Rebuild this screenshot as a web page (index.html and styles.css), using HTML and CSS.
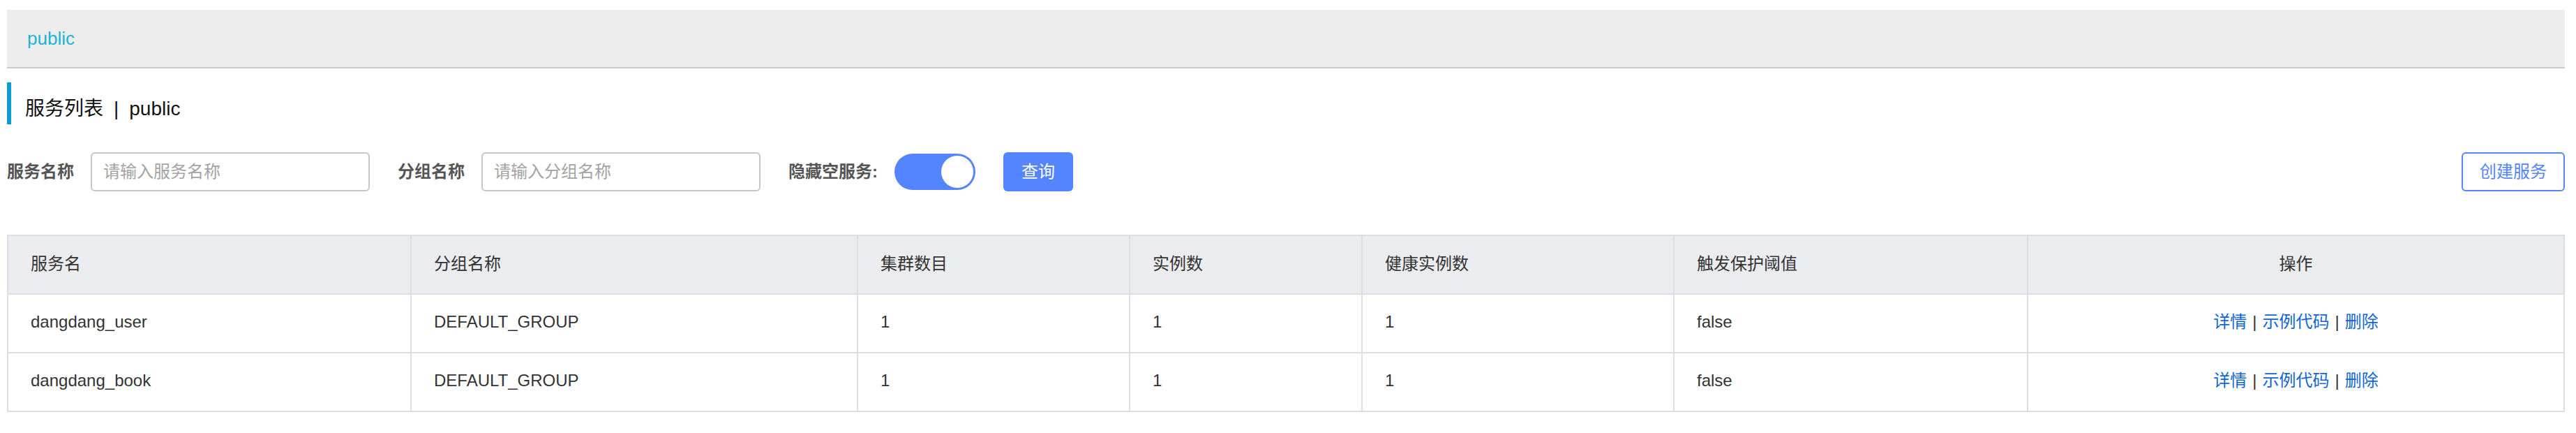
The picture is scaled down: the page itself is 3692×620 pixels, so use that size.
FILE: index.html
```html
<!DOCTYPE html>
<html lang="zh-CN">
<head>
<meta charset="utf-8">
<title>服务列表</title>
<link rel="stylesheet" href="styles.css">
</head>
<body>
<div class="page">
  <div class="ns-bar"><span class="ns-item">public</span></div>

  <h3 class="page-title"><span>服务列表</span><span class="title-sep">|</span><span>public</span></h3>

  <div class="filters">
    <div class="form-item">
      <label class="label">服务名称</label>
      <input class="input" type="text" placeholder="请输入服务名称">
    </div>
    <div class="form-item">
      <label class="label">分组名称</label>
      <input class="input" type="text" placeholder="请输入分组名称">
    </div>
    <div class="form-item">
      <label class="label">隐藏空服务:</label>
      <span class="switch"><span class="knob"></span></span>
    </div>
    <div class="form-item">
      <button class="btn btn-primary">查询</button>
    </div>
    <button class="btn btn-outline create">创建服务</button>
  </div>

  <table class="svc-table">
    <colgroup>
      <col class="w1"><col class="w2"><col class="w3"><col class="w4"><col class="w5"><col class="w6"><col class="w7">
    </colgroup>
    <thead>
      <tr>
        <th>服务名</th>
        <th>分组名称</th>
        <th>集群数目</th>
        <th>实例数</th>
        <th>健康实例数</th>
        <th>触发保护阈值</th>
        <th class="center">操作</th>
      </tr>
    </thead>
    <tbody>
      <tr>
        <td>dangdang_user</td>
        <td>DEFAULT_GROUP</td>
        <td>1</td>
        <td>1</td>
        <td>1</td>
        <td>false</td>
        <td class="center"><a class="link">详情</a><span class="op-sep">|</span><a class="link">示例代码</a><span class="op-sep">|</span><a class="link">删除</a></td>
      </tr>
      <tr>
        <td>dangdang_book</td>
        <td>DEFAULT_GROUP</td>
        <td>1</td>
        <td>1</td>
        <td>1</td>
        <td>false</td>
        <td class="center"><a class="link">详情</a><span class="op-sep">|</span><a class="link">示例代码</a><span class="op-sep">|</span><a class="link">删除</a></td>
      </tr>
    </tbody>
  </table>
</div>
</body>
</html>
```

FILE: styles.css
```css
* { box-sizing: border-box; }

html, body {
  margin: 0;
  padding: 0;
  background: #fff;
}

body {
  font-family: "Liberation Sans", "Noto Sans CJK SC", sans-serif;
  font-size: 24px;
  color: #333;
}

.page {
  padding: 14px 16px 0 10px;
}

/* namespace bar */
.ns-bar {
  height: 84px;
  background: #ededed;
  border-bottom: 2px solid #cccccc;
  padding-left: 29px;
  display: flex;
  align-items: center;
}

.ns-item {
  font-size: 26px;
  color: #16b6d8;
  line-height: 30px;
}

/* title */
.page-title {
  margin: 20px 0 40px 0;
  height: 60px;
  border-left: 6px solid #0b9bcf;
  padding: 24px 0 0 20px;
  font-size: 28px;
  font-weight: normal;
  line-height: 28px;
  color: #111;
}

.title-sep {
  margin: 0 15px;
}

/* filters */
.filters {
  display: flex;
  align-items: center;
  height: 56px;
}

.form-item {
  display: flex;
  align-items: center;
  margin-right: 40px;
}

.label {
  font-size: 24px;
  font-weight: 700;
  color: #555;
  margin-right: 24px;
  line-height: 28px;
}

.input {
  width: 400px;
  height: 56px;
  border: 2px solid #c4c6cf;
  border-radius: 6px;
  padding: 0 16px;
  font-family: "Liberation Sans", "Noto Sans CJK SC", sans-serif;
  font-size: 24px;
  color: #333;
  outline: none;
  background: #fff;
}

.input::placeholder {
  color: #a3a3a3;
}

.switch {
  width: 116px;
  height: 52px;
  border-radius: 26px;
  background: #5584ff;
  display: flex;
  align-items: center;
  justify-content: flex-end;
  padding-right: 2px;
}

.knob {
  width: 48px;
  height: 48px;
  border-radius: 50%;
  background: #fff;
  border: 1px solid #5584ff;
}

.btn {
  height: 56px;
  border-radius: 6px;
  font-family: "Liberation Sans", "Noto Sans CJK SC", sans-serif;
  font-size: 24px;
  line-height: 28px;
  cursor: pointer;
}

.btn-primary {
  background: #5584ff;
  color: #fff;
  border: none;
  padding: 0 26px;
}

.btn-outline {
  background: #fff;
  color: #5584ff;
  border: 2px solid #5584ff;
  padding: 0 24px;
}

.create {
  margin-left: auto;
}

/* table */
.svc-table {
  margin-top: 62px;
  width: 100%;
  table-layout: fixed;
  border-collapse: separate;
  border-spacing: 0;
}

.w1 { width: 580px; }
.w2 { width: 640px; }
.w3 { width: 390px; }
.w4 { width: 333px; }
.w5 { width: 447px; }
.w6 { width: 507px; }
.w7 { width: 769px; }

.svc-table th,
.svc-table td {
  padding: 27px 32px 31px 32px;
  line-height: 24px;
  font-size: 24px;
  font-weight: normal;
  text-align: left;
  color: #333;
  border-right: 2px solid #dcdee3;
  border-bottom: 2px solid #dcdee3;
  white-space: nowrap;
}

.svc-table th {
  padding-top: 28px;
  padding-bottom: 30px;
  background: #ebecf0;
  border-top: 2px solid #dcdee3;
}

.svc-table th:first-child,
.svc-table td:first-child {
  border-left: 2px solid #dcdee3;
}

.svc-table .center {
  text-align: center;
}

.link {
  color: #1166d4;
  text-decoration: none;
  cursor: pointer;
}

.op-sep {
  margin: 0 8px;
  color: #333;
}
```
